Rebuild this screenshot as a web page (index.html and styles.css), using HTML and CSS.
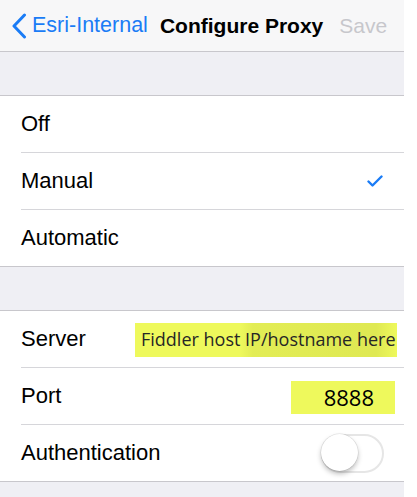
FILE: index.html
```html
<!DOCTYPE html>
<html>
<head>
    <title>Configure Proxy</title>
    <link rel="stylesheet" href="styles.css">
</head>
<body>

    <div class="screen">
        <header class="nav-bar">
            <a class="nav-back" href="#">
                <svg class="chevron" width="16" height="26" viewBox="0 0 16 26">
                    <path d="M13.5 2 L3 13 L13.5 24" fill="none" stroke="#1a7cf6" stroke-width="3" stroke-linecap="round" stroke-linejoin="round"/>
                </svg>
                <span>Esri-Internal</span>
            </a>
            <h1 class="nav-title">Configure Proxy</h1>
            <span class="nav-action">Save</span>
        </header>

        <div class="group-gap"></div>

        <ul class="group">
            <li class="cell"><div class="cell-body"><span class="cell-label">Off</span></div></li>
            <li class="cell">
                <div class="cell-body">
                    <span class="cell-label">Manual</span>
                    <svg class="check" width="16" height="12" viewBox="0 0 16 12">
                        <path d="M1.5 6.5 L5.5 10.5 L14.5 1.5" fill="none" stroke="#1a7cf6" stroke-width="2.4" stroke-linecap="round" stroke-linejoin="round"/>
                    </svg>
                </div>
            </li>
            <li class="cell"><div class="cell-body"><span class="cell-label">Automatic</span></div></li>
        </ul>

        <div class="group-gap"></div>

        <ul class="group">
            <li class="cell">
                <div class="cell-body">
                    <span class="cell-label">Server</span>
                    <span class="field field-server">Fiddler host IP/hostname here</span>
                </div>
            </li>
            <li class="cell">
                <div class="cell-body">
                    <span class="cell-label">Port</span>
                    <span class="field field-port">8888</span>
                </div>
            </li>
            <li class="cell">
                <div class="cell-body">
                    <span class="cell-label">Authentication</span>
                    <span class="switch"><span class="switch-knob"></span></span>
                </div>
            </li>
        </ul>

        <div class="group-gap bottom"></div>
    </div>

</body>
</html>
```

FILE: styles.css
```css
body {
    margin: 0;
    padding: 0;
    background-color: #ffffff;
    font-family: "Liberation Sans", Arial, sans-serif;
    color: #000000;
}

.screen {
    width: 404px;
    background-color: #efeff4;
}

/* navigation bar */

.nav-bar {
    height: 51px;
    display: flex;
    align-items: center;
    background-color: #f7f7f8;
    border-bottom: 1px solid #c8c7cc;
}

.nav-back {
    display: flex;
    align-items: center;
    margin-left: 11px;
    color: #1a7cf6;
    text-decoration: none;
    font-size: 21.5px;
}

.nav-back .chevron {
    margin-right: 5px;
}

.nav-title {
    margin: 0 0 0 12px;
    font-size: 21px;
    font-weight: bold;
}

.nav-action {
    margin-left: 16px;
    font-size: 21px;
    color: #c7c7cc;
}

/* grouped table */

.group-gap {
    height: 43px;
}

.group-gap.bottom {
    height: 16px;
}

.group {
    list-style: none;
    margin: 0;
    padding: 0;
    background-color: #ffffff;
    border-top: 1px solid #c8c7cc;
    border-bottom: 1px solid #c8c7cc;
}

.cell {
    padding-left: 21px;
}

.cell-body {
    height: 57px;
    box-sizing: border-box;
    display: flex;
    align-items: center;
    justify-content: space-between;
    border-bottom: 1px solid #d6d6da;
}

.cell:last-child .cell-body {
    border-bottom: none;
    height: 56px;
}

.cell-label {
    font-size: 22px;
}

.check {
    margin-right: 21px;
}

/* highlighted text fields */

.field {
    display: flex;
    align-items: center;
    background-color: #eef95c;
    font-family: "Open Sans", "Noto Sans", sans-serif;
    color: #262626;
}

.field-server {
    width: 262px;
    height: 34px;
    box-sizing: border-box;
    margin-right: 7px;
    margin-top: 2px;
    padding-left: 6px;
    padding-bottom: 2px;
    font-size: 18px;
    background-image: linear-gradient(to right, rgba(0, 0, 0, 0) 40%, rgba(90, 90, 0, 0.08) 45%, rgba(90, 90, 0, 0.1) 92%, rgba(0, 0, 0, 0) 100%);
}

.field-port {
    width: 104px;
    height: 33px;
    box-sizing: border-box;
    justify-content: flex-end;
    margin-right: 9px;
    margin-top: 2px;
    padding-right: 21px;
    font-size: 22px;
    color: #000000;
}

/* switch */

.switch {
    position: relative;
    width: 63px;
    height: 39px;
    box-sizing: border-box;
    margin-right: 20px;
    border: 2px solid #e6e6e6;
    border-radius: 20px;
    background-color: #ffffff;
}

.switch-knob {
    position: absolute;
    left: -2px;
    top: -2px;
    width: 37px;
    height: 37px;
    border-radius: 50%;
    background-color: #ffffff;
    box-shadow: 0 3px 5px rgba(0, 0, 0, 0.25), 0 0 0 0.5px rgba(0, 0, 0, 0.12);
}
```
